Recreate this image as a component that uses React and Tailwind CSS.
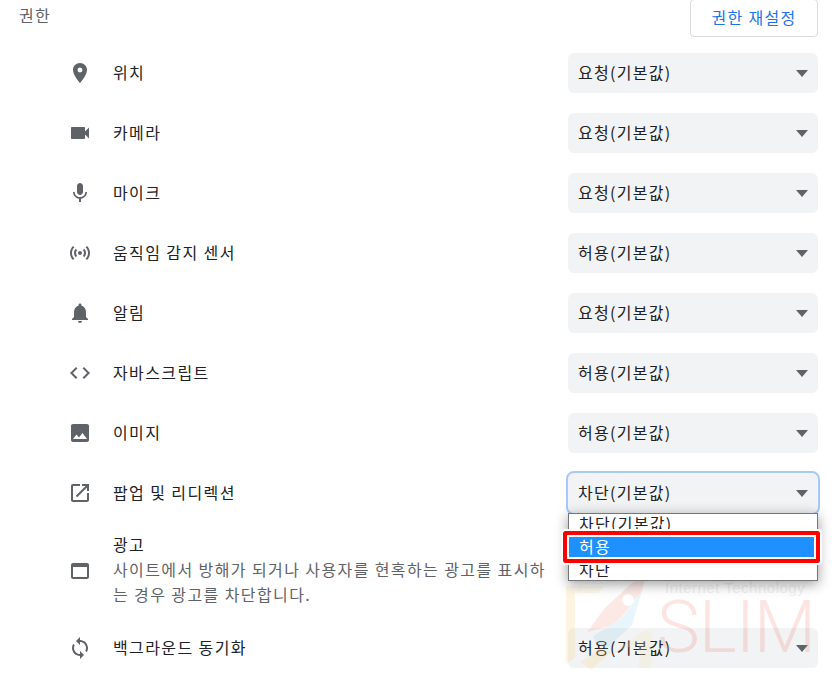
const KR = "font-['Malgun_Gothic','Noto_Sans_CJK_KR',sans-serif]";

const icons = {
  place: "M12 2C8.13 2 5 5.13 5 9c0 5.25 7 13 7 13s7-7.75 7-13c0-3.87-3.13-7-7-7zm0 9.5a2.5 2.5 0 0 1 0-5 2.5 2.5 0 0 1 0 5z",
  video: "M17 10.5V7c0-.55-.45-1-1-1H4c-.55 0-1 .45-1 1v10c0 .55.45 1 1 1h12c.55 0 1-.45 1-1v-3.5l4 4v-11l-4 4z",
  mic: "M12 14c1.66 0 2.99-1.34 2.99-3L15 5c0-1.66-1.34-3-3-3S9 3.34 9 5v6c0 1.66 1.34 3 3 3zm5.3-3c0 3-2.54 5.1-5.3 5.1S6.7 14 6.7 11H5c0 3.41 2.72 6.23 6 6.72V21h2v-3.28c3.28-.48 6-3.3 6-6.72h-1.7z",
  sensors: "M7.76 16.24C6.67 15.16 6 13.66 6 12s.67-3.16 1.76-4.24l1.42 1.42C8.45 9.9 8 10.9 8 12c0 1.1.45 2.1 1.17 2.83l-1.41 1.41zm8.48 0C17.33 15.16 18 13.66 18 12s-.67-3.16-1.76-4.24l-1.42 1.42C15.55 9.9 16 10.9 16 12c0 1.1-.45 2.1-1.17 2.83l1.41 1.41zM12 10c-1.1 0-2 .9-2 2s.9 2 2 2 2-.9 2-2-.9-2-2-2zm8 2c0 2.21-.9 4.21-2.35 5.65l1.42 1.42C20.88 17.26 22 14.76 22 12s-1.12-5.26-2.93-7.07l-1.42 1.42C19.1 7.79 20 9.79 20 12zM6.35 6.35L4.93 4.93C3.12 6.74 2 9.24 2 12s1.12 5.26 2.93 7.07l1.42-1.42C4.9 16.21 4 14.21 4 12s.9-4.21 2.35-5.65z",
  bell: "M12 22c1.1 0 2-.9 2-2h-4c0 1.1.89 2 2 2zm6-6v-5c0-3.07-1.64-5.64-4.5-6.32V4c0-.83-.67-1.5-1.5-1.5s-1.5.67-1.5 1.5v.68C7.63 5.36 6 7.92 6 11v5l-2 2v1h16v-1l-2-2z",
  code: "M9.4 16.6L4.8 12l4.6-4.6L8 6l-6 6 6 6 1.4-1.4zm5.2 0l4.6-4.6-4.6-4.6L16 6l6 6-6 6-1.4-1.4z",
  image: "M21 19V5c0-1.1-.9-2-2-2H5c-1.1 0-2 .9-2 2v14c0 1.1.9 2 2 2h14c1.1 0 2-.9 2-2zM8.5 13.5l2.5 3.01L14.5 12l4.5 6H5l3.5-4.5z",
  open: "M19 19H5V5h7V3H5c-1.11 0-2 .9-2 2v14c0 1.1.89 2 2 2h14c1.1 0 2-.9 2-2v-7h-2v7zM14 3v2h3.59l-9.83 9.83 1.41 1.41L19 6.41V10h2V3h-7z",
  web: "M19 4H5c-1.11 0-2 .9-2 2v12c0 1.1.89 2 2 2h14c1.1 0 2-.9 2-2V6c0-1.1-.89-2-2-2zm0 14H5V8h14v10z",
  sync: "M12 4V1L8 5l4 4V6c3.31 0 6 2.69 6 6 0 1.01-.25 1.97-.7 2.8l1.46 1.46C19.54 15.03 20 13.57 20 12c0-4.42-3.58-8-8-8zm0 14c-3.31 0-6-2.69-6-6 0-1.01.25-1.97.7-2.8L5.24 7.74C4.46 8.97 4 10.43 4 12c0 4.42 3.58 8 8 8v3l4-4-4-4v3z",
};

const Icon = ({ name }) => (
  <svg viewBox="0 0 24 24" className="w-6 h-6 shrink-0 mr-[21px] fill-[#5f6368]">
    <path d={icons[name]} />
  </svg>
);

const Select = ({ value, focused }) => (
  <div
    className={`relative flex items-center justify-between w-[250px] h-10 shrink-0 rounded-md bg-[#f1f3f4] pl-[10px] pr-[10px] text-[16px] tracking-[1.3px] text-[#202124] ${
      focused ? "outline-2 outline-[#a8c7fa]" : ""
    }`}
  >
    <span className="pb-[2px]">{value}</span>
    <span className="w-0 h-0 border-x-[6.5px] border-x-transparent border-t-[7px] border-t-[#5f6368]"></span>
  </div>
);

const rows = [
  ["place", "위치", "요청(기본값)"],
  ["video", "카메라", "요청(기본값)"],
  ["mic", "마이크", "요청(기본값)"],
  ["sensors", "움직임 감지 센서", "허용(기본값)"],
  ["bell", "알림", "요청(기본값)"],
  ["code", "자바스크립트", "허용(기본값)"],
  ["image", "이미지", "허용(기본값)"],
];

const Row = ({ icon, label, value, focused }) => (
  <div className="flex items-center h-[60px] pl-[68px] pr-[21px]">
    <Icon name={icon} />
    <span className="flex-1 pb-[2px] text-[16px] tracking-[1.4px] text-[#202124]">{label}</span>
    <Select value={value} focused={focused} />
  </div>
);

// faint logo sits over the page, the last select shows through it
const Watermark = () => (
  <div className="absolute z-10 left-[563px] top-[578px] w-[260px] h-[95px] pointer-events-none">
    <svg viewBox="0 0 100 95" className="absolute left-0 top-0 w-[100px] h-[95px] opacity-25">
      <path d="M3 8h9v72l-9 6z" fill="#f8d98a" />
      <path d="M3 8h38l-6 7H12z" fill="#f8e6b8" />
      <path d="M24 54l18-24 28-26 12-4-3 13-21 27-10 8z" fill="#f6aaa0" />
      <path d="M30 58l18-11 10-6 21-28-10 34-26 24-10-6z" fill="#a8daf0" />
      <circle cx="65" cy="22" r="6" fill="#ffffff" />
      <path d="M18 84l20-14 10 4-20 18z" fill="#f8d98a" />
      <path d="M50 74l32-22 6 2v36H76V66z" fill="#f8e6b8" />
    </svg>
    <span className="absolute left-[102px] top-[1px] text-[15px] leading-[18px] tracking-[0.5px] text-[#f0f0f0] font-['Liberation_Sans',sans-serif]">
      Internet Technology
    </span>
    <span className="absolute left-[94px] top-[8px] text-[72px] leading-[84px] font-light tracking-[-1px] text-[rgba(240,120,110,0.2)] font-['Roboto',sans-serif]">
      SLIM
    </span>
  </div>
);

const Dropdown = () => (
  <div className="absolute z-20 left-[568px] top-[513px] w-[250px] border border-[#767676] bg-white shadow-[0_3px_12px_rgba(0,0,0,0.4)] text-[16px] tracking-[1.3px] text-[#202124]">
    <div className="h-[22px] pl-[10px] leading-[19px]">차단(기본값)</div>
    <div className="h-[22px] pl-[10px] leading-[21px] bg-[#1e90ff] text-white">허용</div>
    <div className="h-[22px] pl-[10px] leading-[23px]">차단</div>
  </div>
);

export default function App() {
  return (
    <div className={`relative w-[839px] h-[673px] overflow-hidden bg-white ${KR}`}>
      <div className="flex items-start justify-between h-[43px] pl-[19px] pr-[21px]">
        <span className="mt-[3px] text-[16px] tracking-[1.4px] text-[#5f6368]">권한</span>
        <button className="w-[128px] h-[38px] -mt-px pb-[2px] rounded border border-[#dadce0] bg-white text-[16px] tracking-[1.3px] text-[#1a73e8]">
          권한 재설정
        </button>
      </div>
      {rows.map(([icon, label, value]) => (
        <Row key={label} icon={icon} label={label} value={value} />
      ))}
      <Row icon="open" label="팝업 및 리디렉션" value="차단(기본값)" focused />
      <div className="flex items-center h-[95px] pl-[68px] pr-[21px]">
        <Icon name="web" />
        <div className="w-[435px] pb-[2px] text-[16px] tracking-[1.4px] leading-[25px] break-all">
          <div className="text-[#202124]">광고</div>
          <div className="text-[#5f6368]">
            사이트에서 방해가 되거나 사용자를 현혹하는 광고를 표시하는 경우 광고를 차단합니다.
          </div>
        </div>
      </div>
      <Row icon="sync" label="백그라운드 동기화" value="허용(기본값)" />
      <Watermark />
      <Dropdown />
      <div className="absolute z-30 left-[563px] top-[531px] w-[257px] h-[32px] border-[4px] border-[#ff0000] rounded-[2px] outline-2 outline-white shadow-[inset_0_0_0_2px_#ffffff]"></div>
    </div>
  );
}
